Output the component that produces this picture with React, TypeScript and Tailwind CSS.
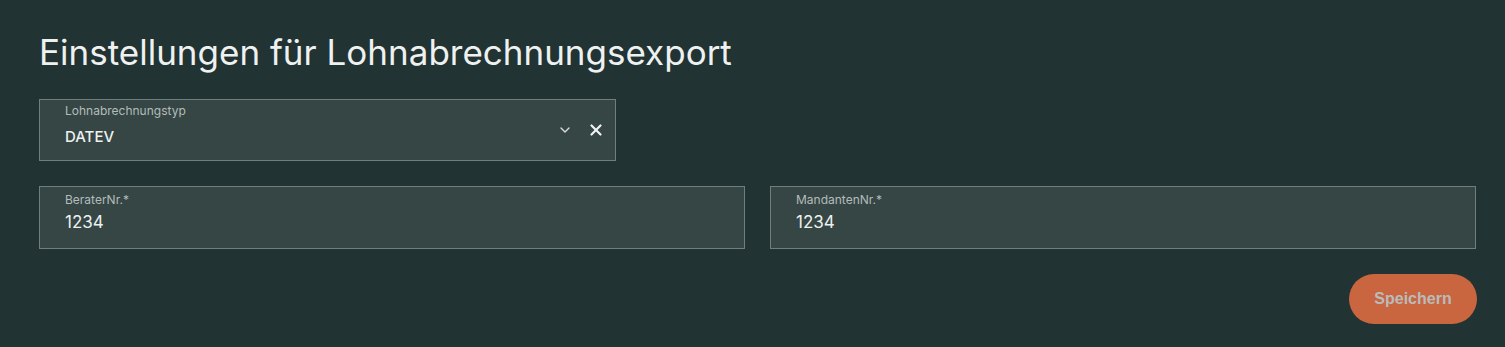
import { ChevronDown, X } from 'lucide-react';

function Field({ label, value, className = '' }: { label: string; value: string; className?: string }) {
  return (
    <div className={`h-[63px] border border-[#6f7f7c] bg-[#354645] pl-[25px] pt-[5px] ${className}`}>
      <p className="text-[12px] leading-[16px] text-[#b3bcba]">{label}</p>
      <p className="mt-[4px] text-[17px] leading-[20px] text-[#eef1f0]">{value}</p>
    </div>
  );
}

export default function App() {
  return (
    <div className="min-h-[347px] bg-[#213333] pl-[39px] pr-[28px] pt-[30px]" style={{ fontFamily: 'Inter, "Noto Sans", sans-serif' }}>
      <h1 className="text-[35px] leading-[44px] text-[#eef1f0]">Einstellungen für Lohnabrechnungsexport</h1>

      <div className="mt-[25px] flex h-[62px] w-[577px] items-start border border-[#6f7f7c] bg-[#354645] pl-[25px] pr-[10px]">
        <div className="flex-1 pt-[3px]">
          <p className="text-[12px] leading-[16px] text-[#b3bcba]">Lohnabrechnungstyp</p>
          <p className="mt-[8px] text-[15px] leading-[20px] font-medium text-[#eef1f0]">DATEV</p>
        </div>
        <div className="flex items-center self-center">
          <ChevronDown className="h-[16px] w-[16px] text-[#d8dddc]" strokeWidth={2} />
          <X className="ml-[14px] h-[18px] w-[18px] text-[#eef1f0]" strokeWidth={3} />
        </div>
      </div>

      <div className="mt-[25px] flex gap-[25px] pr-[1px]">
        <Field label="BeraterNr.*" value="1234" className="w-[706px]" />
        <Field label="MandantenNr.*" value="1234" className="flex-1" />
      </div>

      <div className="mt-[25px] flex justify-end">
        <button className="h-[50px] w-[128px] rounded-full bg-[#c96640] text-[16px] font-bold text-[#b9bcbb]" style={{ fontFamily: '"Liberation Sans", Arial, sans-serif' }}>
          Speichern
        </button>
      </div>
    </div>
  );
}
